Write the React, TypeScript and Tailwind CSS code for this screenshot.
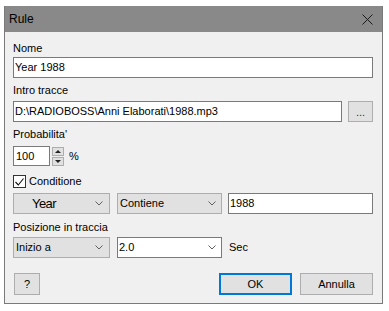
import React from 'react'

const font = { fontFamily: '"Liberation Sans", Arial, sans-serif' }

const Chevron = () => (
  <svg width="8" height="5" viewBox="0 0 8 5" className="shrink-0">
    <path d="M0.5 0.5 L4 4 L7.5 0.5" fill="none" stroke="#606060" strokeWidth="1" />
  </svg>
)

const Label: React.FC<{ text: string; mt: string }> = ({ text, mt }) => (
  <div className={`${mt} h-[13px] leading-[13px] text-[11px] text-black`}>{text}</div>
)

const App: React.FC = () => {
  return (
    <div className="w-[389px] h-[311px] bg-white pt-[6px] pl-[4px]" style={font}>
      <div className="w-[379px] h-[298px] border-x border-b border-[#7a7a7a] bg-[#f0f0f0] flex flex-col">
        <div className="h-[26px] bg-[#898989] flex items-center justify-between pl-[4px] pr-[9px] shrink-0">
          <span className="text-[12px] text-black">Rule</span>
          <svg width="11" height="11" viewBox="0 0 11 11">
            <path d="M0.5 0.5 L10.5 10.5 M10.5 0.5 L0.5 10.5" stroke="#1a1a1a" strokeWidth="1" />
          </svg>
        </div>

        <div className="flex flex-col pl-[8px] pr-[9px] text-[11px] text-black">
          <Label text="Nome" mt="mt-[10px]" />
          <div className="mt-[2px] h-[21px] border border-[#7a7a7a] bg-white flex items-center px-[1px]">
            Year 1988
          </div>

          <Label text="Intro tracce" mt="mt-[6px]" />
          <div className="mt-[4px] flex gap-[6px]">
            <div className="flex-1 h-[21px] border border-[#7a7a7a] bg-white flex items-center px-[1px]">
              D:\RADIOBOSS\Anni Elaborati\1988.mp3
            </div>
            <div className="w-[25px] h-[21px] border border-[#adadad] bg-[#e1e1e1] flex items-end justify-center pb-[3px] text-[#333] leading-none">
              ...
            </div>
          </div>

          <Label text="Probabilita'" mt="mt-[6px]" />
          <div className="mt-[5px] flex items-center">
            <div className="w-[37px] h-[20px] border border-[#7a7a7a] bg-white flex items-center px-[2px]">100</div>
            <div className="ml-[2px] flex flex-col gap-[1px]">
              <div className="w-[12px] h-[9px] border border-[#adadad] bg-[#e1e1e1] flex items-center justify-center">
                <svg width="6" height="3" viewBox="0 0 6 3"><path d="M0 3 L3 0 L6 3 Z" fill="#222" /></svg>
              </div>
              <div className="w-[12px] h-[9px] border border-[#adadad] bg-[#e1e1e1] flex items-center justify-center">
                <svg width="6" height="3" viewBox="0 0 6 3"><path d="M0 0 L6 0 L3 3 Z" fill="#222" /></svg>
              </div>
            </div>
            <span className="ml-[5px]">%</span>
          </div>

          <div className="mt-[9px] flex items-center h-[13px]">
            <div className="w-[13px] h-[13px] border border-[#333] bg-white flex items-center justify-center">
              <svg width="9" height="8" viewBox="0 0 9 8">
                <path d="M0.5 4 L3.3 7 L8.5 0.5" fill="none" stroke="#111" strokeWidth="1.1" />
              </svg>
            </div>
            <span className="ml-[3px]">Conditione</span>
          </div>

          <div className="mt-[5px] flex h-[21px]">
            <div className="w-[97px] border border-[#adadad] bg-[#e1e1e1] flex items-center justify-between pl-[18px] pr-[6px]">
              <span className="text-[13px] tracking-[-0.6px]">Year</span>
              <Chevron />
            </div>
            <div className="ml-[7px] w-[105px] border border-[#adadad] bg-[#e1e1e1] flex items-center justify-between pl-[2px] pr-[5px]">
              <span>Contiene</span>
              <Chevron />
            </div>
            <div className="ml-[6px] flex-1 border border-[#7a7a7a] bg-white flex items-center px-[1px]">1988</div>
          </div>

          <Label text="Posizione in traccia" mt="mt-[7px]" />
          <div className="mt-[3px] flex h-[21px] items-center">
            <div className="w-[97px] h-[21px] border border-[#adadad] bg-[#e1e1e1] flex items-center justify-between pl-[2px] pr-[6px]">
              <span>Inizio a</span>
              <Chevron />
            </div>
            <div className="ml-[7px] w-[105px] h-[21px] border border-[#7a7a7a] bg-white flex items-center justify-between pl-[1px] pr-[5px]">
              <span>2.0</span>
              <Chevron />
            </div>
            <span className="ml-[7px]">Sec</span>
          </div>

          <div className="mt-[15px] flex h-[22px]">
            <div className="ml-[1px] w-[26px] border border-[#adadad] bg-[#e1e1e1] flex items-center justify-center">?</div>
            <div className="flex-1" />
            <div className="w-[73px] border-2 border-[#0078d7] bg-[#e1e1e1] flex items-center justify-center">OK</div>
            <div className="ml-[8px] w-[73px] border border-[#adadad] bg-[#e1e1e1] flex items-center justify-center">Annulla</div>
          </div>
        </div>
      </div>
    </div>
  )
}

export default App
